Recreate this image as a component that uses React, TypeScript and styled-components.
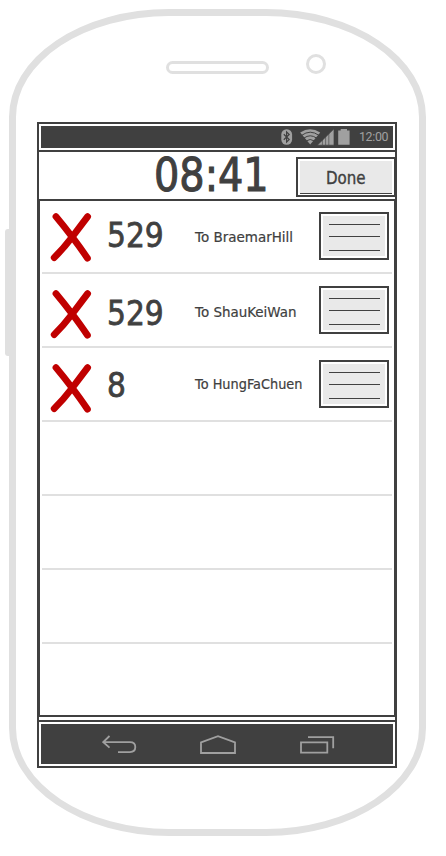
import React from 'react';
import styled, { createGlobalStyle } from 'styled-components';

const ink = '#404040';
const pale = '#e0e0e0';
const muted = '#a0a0a0';

const GlobalStyle = createGlobalStyle`
  * { box-sizing: border-box; }
  body { margin: 0; background: #fff; color: ${ink}; }
  button { margin: 0; font: inherit; color: inherit; cursor: pointer; }
`;

const Stage = styled.main`
  width: 446px;
  height: 856px;
  padding: 9px 0 0 5px;
  display: flex;
  align-items: flex-start;
  overflow: hidden;
`;

const SideButton = styled.div`
  width: 4px;
  height: 127px;
  margin-top: 220px;
  background: ${pale};
  border-radius: 3px 0 0 3px;
`;

const Phone = styled.div`
  width: 417px;
  height: 827px;
  border: 7px solid ${pale};
  border-radius: 160px / 108px;
  padding: 0 22px 0 21px;
`;

const Earpiece = styled.div`
  height: 106px;
  display: flex;
  align-items: flex-start;
  padding: 38px 0 0 129px;
`;

const Speaker = styled.div`
  width: 103px;
  height: 13px;
  margin: 7px 37px 0 0;
  border: 3px solid ${pale};
  border-radius: 7px;
`;

const Camera = styled.div`
  width: 20px;
  height: 20px;
  border: 3px solid ${pale};
  border-radius: 50%;
`;

const Screen = styled.div`
  width: 360px;
  height: 646px;
  border: 2px solid ${ink};
  display: flex;
  flex-direction: column;
`;

const Bar = styled.div<{ $h: number }>`
  height: ${p => p.$h}px;
  border: 2px solid #fff;
  background: ${ink};
  flex: none;
  display: flex;
`;

const StatusBar = styled(Bar)`
  justify-content: flex-end;
  padding-right: 5px;
  svg { flex: none; }
`;

const StatusIcons = styled.div`
  display: flex;
  gap: 3px;
  margin-right: 9px;
`;

const BluetoothSlot = styled.span`
  width: 16px;
  height: 22px;
`;

const Clock = styled.span`
  width: 29px;
  font: 12.4px/22px Roboto, sans-serif;
  letter-spacing: -0.35px;
  white-space: nowrap;
  color: ${muted};
`;

const Header = styled.header`
  height: 49px;
  flex: none;
  border-top: 2px solid ${ink};
  display: flex;
  justify-content: space-between;
  padding-left: 115px;
`;

/* Handwriting-like lettering: rounded outline and slightly narrowed glyphs */
const Lettering = styled.span<{ $size: number; $fit: number; $stroke?: number }>`
  display: block;
  font-family: 'DejaVu Sans', sans-serif;
  font-size: ${p => p.$size}px;
  line-height: 1;
  white-space: nowrap;
  transform: scaleX(${p => p.$fit});
  transform-origin: left;
  -webkit-text-stroke: ${p => p.$stroke ?? 0}px ${ink};
  stroke-linejoin: round;
`;

const Time = styled.h1`
  width: 120px;
  margin: 0;
  font-weight: 400;
`;

const DoneButton = styled.button`
  width: 100px;
  height: 40px;
  margin: 5px -1px 0 0;
  padding: 0;
  border: 2px solid ${ink};
  background: #fff;
  display: flex;
`;

const DoneFace = styled.span`
  flex: 1;
  height: 33px;
  margin: 2px;
  padding: 9px 0 0 26px;
  background: #e9e9e9;
  border-bottom: 1px solid ${ink};
  text-align: left;
`;

const List = styled.ul`
  height: 518px;
  flex: none;
  margin: 0;
  padding: 0 2px;
  list-style: none;
  border: solid ${ink};
  border-width: 2px 1px;
`;

const Row = styled.li<{ $first?: boolean; $last?: boolean }>`
  height: ${p => (p.$first ? 73 : 74)}px;
  border-bottom: ${p => (p.$last ? 0 : 2)}px solid ${pale};
  display: flex;
  align-items: flex-end;
`;

const Cross = styled.button<{ $lift: number }>`
  width: 42px;
  height: 49px;
  margin: 0 15px ${p => p.$lift}px 8px;
  padding: 0;
  border: 0;
  background: none;
  display: block;
  svg { display: block; }
`;

const RouteNumber = styled.div<{ $lift: number }>`
  width: 88px;
  padding-bottom: ${p => p.$lift}px;
`;

const Destination = styled.div<{ $lift: number }>`
  width: 124px;
  padding-bottom: ${p => p.$lift}px;
`;

const DetailsButton = styled.button`
  width: 70px;
  height: 48px;
  margin-bottom: 12px;
  padding: 2px;
  border: 2px solid ${ink};
  background: #fff;
`;

const Details = styled.span`
  display: grid;
  grid-template-rows: 1px 1px 1px;
  row-gap: 11px;
  height: 40px;
  padding: 8px 5px 0 6px;
  background: #e9e9e9;
`;

const Line = styled.i<{ $drop?: boolean }>`
  height: 1px;
  background: ${ink};
  margin-top: ${p => (p.$drop ? 2 : 0)}px;
`;

const NavBar = styled(Bar)`
  margin-top: 3px;
  padding: 0 58px 0 61px;
  justify-content: space-between;
  align-items: center;
`;

const NavRule = styled.div`
  height: 5px;
  flex: none;
  border-bottom: 2px solid ${ink};
  margin-bottom: -3px;
`;

const Bluetooth = () => (
  <svg width="12" height="22" viewBox="281 126 12 22">
    <rect x="281.3" y="129.3" width="10.8" height="15.4" rx="5.2" fill={muted} />
    <path d="M283.8 134.2l5.4 5.3-2.6 2.6v-10.2l2.6 2.6-5.4 5.3" fill="none" stroke={ink} strokeWidth="1.2" />
  </svg>
);

const Signal = () => (
  <svg width="35" height="22" viewBox="300 126 35 22">
    <path d="M300.2 132.6q9.9-6.6 20 0l-10 12z" fill={muted} />
    <g fill="none" stroke={ink} strokeWidth="1">
      <path d="M301.6 135.4q8.6-6.4 17.4 0M303.9 138.1q6.3-4.6 12.7 0M306.2 140.9q4-2.8 8 0" />
    </g>
    <path d="M317.3 145.2L334 128.8v16.4z" fill={muted} stroke={ink} strokeWidth=".7" />
    <path d="M322.4 139v6M325.6 136v9M328.8 133v12" stroke={ink} strokeWidth=".6" />
  </svg>
);

const Battery = () => (
  <svg width="12" height="22" viewBox="338 126 12 22">
    <path d="M338.2 130.6h2.5v-1.6h6.3v1.6h2.6v14.2h-11.4z" fill={muted} />
  </svg>
);

const CrossIcon = () => (
  <svg width="42" height="49" viewBox="50 213 42 49">
    <path d="M56 216.6Q63.5 225.5 72.4 237.2T87.4 258.2M87.6 216.6Q80.5 226 72 237.2T54.2 257.6" fill="none" stroke="#c00000" strokeWidth="6.8" strokeLinecap="round" strokeLinejoin="round" />
  </svg>
);

const BackIcon = () => (
  <svg width="35" height="20" viewBox="102 734 35 20">
    <path d="M109.5 736l-6.2 6.1 6.2 5.6M103.6 742.1H130q5.3 0 5.3 5t-5.3 5h-12" fill="none" stroke={muted} strokeWidth="1.8" />
  </svg>
);

const HomeIcon = () => (
  <svg width="38" height="20" viewBox="200 734 38 20">
    <path d="M201 753v-10.6l17-6.2 17 6.2V753z" fill="none" stroke={muted} strokeWidth="1.8" />
  </svg>
);

const RecentIcon = () => (
  <svg width="35" height="20" viewBox="300 734 35 20">
    <path d="M301 742.3h26.3v10.3H301zM308 737.2h25.2v11" fill="none" stroke={muted} strokeWidth="1.8" />
  </svg>
);

interface Stop {
  route: string;
  to: string;
  fit: number;
  cross: number;
  number: number;
  label: number;
}

const stops: Stop[] = [
  { route: '529', to: 'To BraemarHill', fit: 0.998, cross: 10, number: 20, label: 28 },
  { route: '529', to: 'To ShauKeiWan', fit: 0.995, cross: 7, number: 16, label: 27 },
  { route: '8', to: 'To HungFaChuen', fit: 0.955, cross: 7, number: 18, label: 29 },
];

export default function App() {
  return (
    <>
      <GlobalStyle />
      <Stage>
        <SideButton />
        <Phone>
          <Earpiece>
            <Speaker />
            <Camera />
          </Earpiece>
          <Screen>
            <StatusBar $h={26}>
              <StatusIcons>
                <BluetoothSlot>
                  <Bluetooth />
                </BluetoothSlot>
                <Signal />
                <Battery />
              </StatusIcons>
              <Clock>12:00</Clock>
            </StatusBar>
            <Header>
              <Time>
                <Lettering $size={46} $fit={0.865} $stroke={1.1}>08:41</Lettering>
              </Time>
              <DoneButton>
                <DoneFace>
                  <Lettering $size={17.5} $fit={0.86} $stroke={0.4}>Done</Lettering>
                </DoneFace>
              </DoneButton>
            </Header>
            <List>
              {stops.map((s, i) => (
                <Row key={i} $first={i === 0}>
                  <Cross $lift={s.cross} aria-label="Remove">
                    <CrossIcon />
                  </Cross>
                  <RouteNumber $lift={s.number}>
                    <Lettering $size={33} $fit={0.9} $stroke={0.8}>{s.route}</Lettering>
                  </RouteNumber>
                  <Destination $lift={s.label}>
                    <Lettering $size={13.5} $fit={s.fit} $stroke={0.2}>{s.to}</Lettering>
                  </Destination>
                  <DetailsButton aria-label="Details">
                    <Details>
                      <Line />
                      <Line />
                      <Line $drop />
                    </Details>
                  </DetailsButton>
                </Row>
              ))}
              <Row />
              <Row />
              <Row />
              <Row $last />
            </List>
            <NavRule />
            <NavBar $h={44}>
              <BackIcon />
              <HomeIcon />
              <RecentIcon />
            </NavBar>
          </Screen>
        </Phone>
      </Stage>
    </>
  );
}
